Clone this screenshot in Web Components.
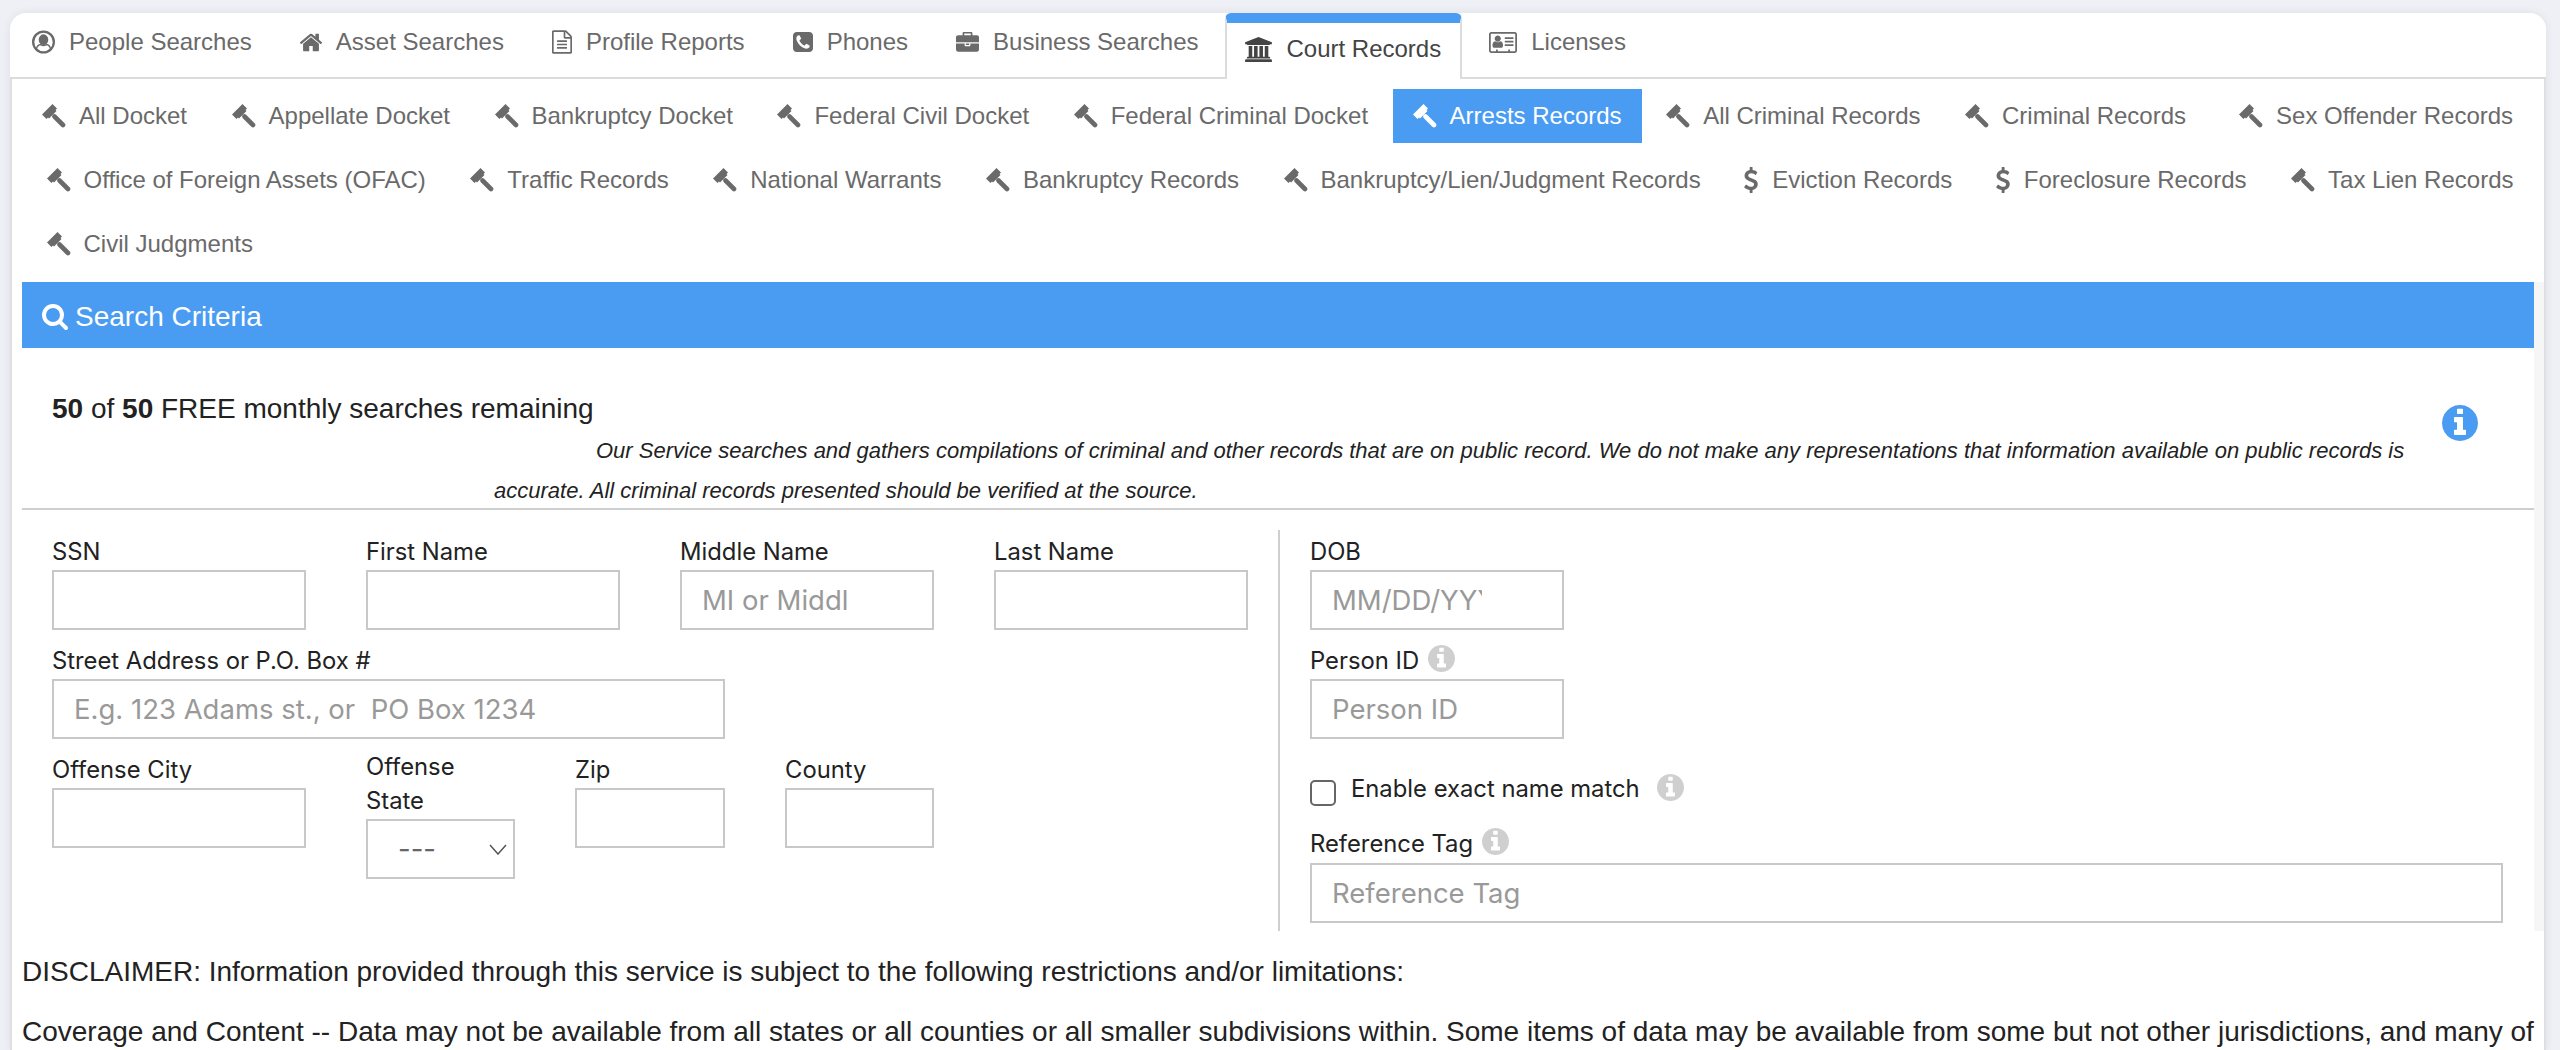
<!DOCTYPE html>
<html>
<head>
<meta charset="utf-8">
<title>Court Records</title>
<style>
	html, body { margin: 0; height: 1050px; overflow: hidden; }
	body { background: #eef0f6; font-family: "Liberation Sans", Arial, sans-serif; color: #222; }
</style>
</head>
<body>
<search-card>
	<tab-bar slot="tabs">
		<nav-tab icon="user" first>People Searches</nav-tab>
		<nav-tab icon="home">Asset Searches</nav-tab>
		<nav-tab icon="file">Profile Reports</nav-tab>
		<nav-tab icon="phone">Phones</nav-tab>
		<nav-tab icon="briefcase">Business Searches</nav-tab>
		<nav-tab icon="bank" active>Court Records</nav-tab>
		<nav-tab icon="idcard">Licenses</nav-tab>
	</tab-bar>

	<pill-nav>
		<pill-item first>All Docket</pill-item>
		<pill-item>Appellate Docket</pill-item>
		<pill-item>Bankruptcy Docket</pill-item>
		<pill-item>Federal Civil Docket</pill-item>
		<pill-item>Federal Criminal Docket</pill-item>
		<pill-item active>Arrests Records</pill-item>
		<pill-item>All Criminal Records</pill-item>
		<pill-item>Criminal Records</pill-item>
		<pill-item wide>Sex Offender Records</pill-item>
		<pill-item>Office of Foreign Assets (OFAC)</pill-item>
		<pill-item>Traffic Records</pill-item>
		<pill-item>National Warrants</pill-item>
		<pill-item>Bankruptcy Records</pill-item>
		<pill-item>Bankruptcy/Lien/Judgment Records</pill-item>
		<pill-item icon="dollar">Eviction Records</pill-item>
		<pill-item icon="dollar">Foreclosure Records</pill-item>
		<pill-item>Tax Lien Records</pill-item>
		<pill-item>Civil Judgments</pill-item>
	</pill-nav>

	<search-panel>
		<span slot="title">Search Criteria</span>
		<span slot="count"><b>50</b> of <b>50</b> FREE monthly searches remaining</span>
		<span slot="notice">Our Service searches and gathers compilations of criminal and other records that are on public record. We do not make any representations that information available on public records is accurate. All criminal records presented should be verified at the source.</span>

		<field-row slot="left">
			<form-field label="SSN"></form-field>
			<form-field label="First Name"></form-field>
			<form-field label="Middle Name" placeholder="MI or Middle Name"></form-field>
			<form-field label="Last Name"></form-field>
		</field-row>
		<field-row slot="left">
			<form-field label="Street Address or P.O. Box #" placeholder="E.g. 123 Adams st., or  PO Box 1234" width="673"></form-field>
		</field-row>
		<field-row slot="left">
			<form-field label="Offense City"></form-field>
			<form-field label="Offense State" type="select" width="149" style="margin-top:-3px"></form-field>
			<form-field label="Zip" width="150"></form-field>
			<form-field label="County" width="149"></form-field>
		</field-row>

		<field-row slot="right">
			<form-field label="DOB" placeholder="MM/DD/YYYY" pad="80"></form-field>
		</field-row>
		<field-row slot="right">
			<form-field label="Person ID" placeholder="Person ID" hint></form-field>
		</field-row>
		<check-row slot="right">Enable exact name match</check-row>
		<field-row slot="right">
			<form-field label="Reference Tag" placeholder="Reference Tag" width="1193" hint tight></form-field>
		</field-row>
	</search-panel>

	<disclaimer-text>
		<p>DISCLAIMER: Information provided through this service is subject to the following restrictions and/or limitations:</p>
		<p>Coverage and Content -- Data may not be available from all states or all counties or all smaller subdivisions within. Some items of data may be available from some but not other jurisdictions, and many of</p>
	</disclaimer-text>
</search-card>

<script>
	// font awesome 4 shapes, plus a hand drawn gavel
	const ICONS = {
		user: { box: '0 0 24 24', w: 23, h: 24, svg: '<circle cx="12" cy="12" r="10.8" fill="none" stroke="currentColor" stroke-width="2.4"/><ellipse cx="12" cy="9.6" rx="5" ry="5.6" fill="currentColor"/><path d="M4.6 19.4c.6-3 2.4-4.6 4.4-4.8 1.8 1.3 4.2 1.3 6 0 2 .2 3.800 1.800 4.400 4.800" fill="none" stroke="currentColor" stroke-width="1.500"/>' },
		home: { box: '96 224 1600 1344', w: 22, h: 19, d: 'M1472 992v480q0 26-19 45t-45 19h-384v-384h-256v384h-384q-26 0-45-19t-19-45v-480q0-1 .5-3t.5-3l575-474 575 474q1 2 1 6zm223-69l-62 74q-8 9-21 11h-3q-13 0-21-7l-692-577-692 577q-12 8-24 7-13-2-21-11l-62-74q-8-10-7-23.500t11-20.500l719-599q32-26 76-26t76 26l244 204v-195q0-14 9-23t23-9h192q14 0 23 9t9 23v408l219 182q10 8 11 21.500t-7 23.500z' },
		file: { box: '128 0 1536 1792', w: 20, h: 24, d: 'M1596 380q28 28 48 76t20 88v1152q0 40-28 68t-68 28h-1344q-40 0-68-28t-28-68v-1600q0-40 28-68t68-28h896q40 0 88 20t76 48zm-444-244v376h376q-10-29-22-41l-313-313q-12-12-41-22zm384 1528v-1024h-416q-40 0-68-28t-28-68v-416h-768v1536h1280zm-1024-864q0-14 9-23t23-9h704q14 0 23 9t9 23v64q0 14-9 23t-23 9h-704q-14 0-23-9t-9-23v-64zm736 224q14 0 23 9t9 23v64q0 14-9 23t-23 9h-704q-14 0-23-9t-9-23v-64q0-14 9-23t23-9h704zm0 256q14 0 23 9t9 23v64q0 14-9 23t-23 9h-704q-14 0-23-9t-9-23v-64q0-14 9-23t23-9h704z' },
		phone: { box: '128 128 1536 1536', w: 20, h: 20, d: 'M1408 1193q0-11-2-16t-18-16.500-40.500-25-47.500-26.500-45.500-25-28.500-15q-5-3-19-13t-25-15-21-5q-15 0-36.500 20.500t-39.500 45-38.500 45-33.500 20.500q-7 0-16.500-3.500t-15.500-6.500-17-9.500-14-8.500q-99-55-170-126.500t-127-170.500q-2-3-8.500-14t-9.500-17-6.500-15.500-3.500-16.500q0-13 20.500-33.500t45-38.500 45-39.500 20.500-36.500q0-10-5-21t-15-25-13-19q-3-6-15-28.500t-25-45.500-26.500-47.500-25-40.500-16.500-18-16-2q-48 0-101 22-46 21-80 94.500t-34 130.500q0 16 2.500 34t5 30.500 9 33 10 29.500 12.500 33 11 30q60 164 216.500 320.500t320.500 216.500q6 2 30 11t33 12.500 29.500 10 33 9 30.500 5 34 2.500q57 0 130.500-34t94.500-80q22-53 22-101zm256-777v960q0 119-84.500 203.500t-203.500 84.500h-960q-119 0-203.500-84.500t-84.500-203.500v-960q0-119 84.500-203.500t203.500-84.500h960q119 0 203.500 84.500t84.500 203.500z' },
		briefcase: { box: '0 32 1792 1504', w: 23, h: 20, d: 'M640 256h512v-128h-512v128zm1152 640v480q0 66-47 113t-113 47h-1472q-66 0-113-47t-47-113v-480h672v160q0 26 19 45t45 19h320q26 0 45-19t19-45v-160h672zm-768 0v128h-256v-128h256zm768-480v384h-1792v-384q0-66 47-113t113-47h352v-160q0-40 28-68t68-28h576q40 0 68 28t28 68v160h352q66 0 113 47t47 113z' },
		bank: { box: '0 0 1920 1792', w: 27, h: 25, d: 'M960 0l960 384v128h-128q0 26-20.500 45t-48.500 19h-1526q-28 0-48.500-19t-20.500-45h-128v-128zm-704 640h256v768h128v-768h256v768h128v-768h256v768h128v-768h256v768h59q28 0 48.500 19t20.500 45v64h-1664v-64q0-26 20.500-45t48.500-19h59v-768zm1595 960q28 0 48.500 19t20.500 45v128h-1920v-128q0-26 20.500-45t48.500-19h1782z' },
		idcard: { box: '0 128 2048 1536', w: 28, h: 21, d: 'M1024 1131q0 64-37 106.500t-91 42.500h-512q-54 0-91-42.500t-37-106.500 9-117.500 29.500-103 60.500-78 97-28.500q6 4 30 18t37.500 21.500 35.500 17.500 43 14.500 42 4.500 42-4.500 43-14.500 35.500-17.500 37.500-21.500 30-18q57 0 97 28.500t60.500 78 29.500 103 9 117.500zm-157-520q0 94-66.500 160.500t-160.500 66.500-160.500-66.500-66.500-160.500 66.500-160.500 160.500-66.500 160.500 66.500 66.500 160.500zm925 445v64q0 14-9 23t-23 9h-576q-14 0-23-9t-9-23v-64q0-14 9-23t23-9h576q14 0 23 9t9 23zm0-252v56q0 15-10.500 25.500t-25.500 10.500h-568q-15 0-25.500-10.500t-10.500-25.500v-56q0-15 10.500-25.500t25.500-10.500h568q15 0 25.500 10.500t10.500 25.500zm0-260v64q0 14-9 23t-23 9h-576q-14 0-23-9t-9-23v-64q0-14 9-23t23-9h576q14 0 23 9t9 23zm128 960v-1216q0-13-9.500-22.500t-22.500-9.500h-1728q-13 0-22.500 9.500t-9.500 22.500v1216q0 13 9.500 22.500t22.500 9.500h352v-96q0-14 9-23t23-9h64q14 0 23 9t9 23v96h768v-96q0-14 9-23t23-9h64q14 0 23 9t9 23v96h352q13 0 22.500-9.500t9.500-22.500zm128-1216v1216q0 66-47 113t-113 47h-1728q-66 0-113-47t-47-113v-1216q0-66 47-113t113-47h1728q66 0 113 47t47 113z' },
		gavel: { box: '0 0 24 24', w: 24, h: 24, svg: '<path d="M10.500 0L15 4.500 13.500 6l1 1L7 14.500l-1-1L4.500 15 0 10.500z" fill="currentColor"/><path d="M12.500 12.500l8.500 8.500" fill="none" stroke="currentColor" stroke-width="4.600" stroke-linecap="round"/>' },
		dollar: { box: '430 0 932 1792', w: 14, h: 26, d: 'M1362 1185q0 153-99.500 263.500t-258.500 136.500v175q0 14-9 23t-23 9h-135q-13 0-22.500-9.500t-9.500-22.500v-175q-66-9-127.500-31t-101.500-44.500-74-48-46.500-37.500-17.500-18q-17-21-2-41l103-135q7-10 23-12 15-2 24 9l2 2q113 99 243 125 37 8 74 8 81 0 142.500-43t61.500-122q0-28-15-53t-33.500-42-58.500-37.500-66-32-80-32.500q-39-16-61.500-25t-61.500-26.500-62.500-31-56.500-35.500-53.500-42.500-43.500-49-35.500-58-21-66.500-8.500-78q0-138 98-242t255-134v-180q0-13 9.500-22.500t22.500-9.500h135q14 0 23 9t9 23v176q57 6 110.500 23t87 33.500 63.500 37.500 39 29 15 14q17 18 5 38l-81 146q-8 15-23 16-14 3-27-7-3-3-14.500-12t-39-26.500-58.500-32-74.500-26-85.500-11.500q-95 0-155 43t-60 111q0 26 8.500 48t29.500 41.500 39.500 33 56 31 60.500 27 70 27.500q53 20 81 31.500t76 35 75.500 42.500 62 50 53 63.500 31.500 76.500 13 94z' },
		search: { box: '64 128 1664 1664', w: 26, h: 26, d: 'M1216 832q0-185-131.500-316.500t-316.500-131.500-316.500 131.500-131.500 316.500 131.500 316.500 316.500 131.500 316.500-131.500 131.500-316.500zm512 832q0 52-38 90t-90 38q-54 0-90-38l-343-342q-179 124-399 124-143 0-273.500-55.500t-225-150-150-225-55.500-273.500 55.500-273.500 150-225 225-150 273.500-55.500 273.500 55.500 225 150 150 225 55.500 273.500q0 220-124 399l343 343q37 37 37 90z' },
		info: { box: '128 128 1536 1536', w: 27, h: 27, d: 'M1152 1376v-160q0-14-9-23t-23-9h-96v-512q0-14-9-23t-23-9h-320q-14 0-23 9t-9 23v160q0 14 9 23t23 9h96v320h-96q-14 0-23 9t-9 23v160q0 14 9 23t23 9h448q14 0 23-9t9-23zm-128-896v-160q0-14-9-23t-23-9h-192q-14 0-23 9t-9 23v160q0 14 9 23t23 9h192q14 0 23-9t9-23zm640 416q0 209-103 385.500t-279.500 279.500-385.500 103-385.500-103-279.500-279.500-103-385.500 103-385.500 279.500-279.500 385.500-103 385.500 103 279.500 279.500 103 385.500z' }
	};

	class FaIcon extends HTMLElement {
		connectedCallback() {
			const icon = ICONS[this.getAttribute('name')];
			const w = this.getAttribute('w') || icon.w;
			const h = this.getAttribute('h') || icon.h;
			const body = icon.svg || `<path fill="currentColor" d="${icon.d}"/>`;
			this.attachShadow({ mode: 'open' }).innerHTML = `
				<style>
					:host { display: inline-block; flex: none; line-height: 0; }
				</style>
				<svg width="${w}" height="${h}" viewBox="${icon.box}">${body}</svg>
			`;
		}
	}

	class SearchCard extends HTMLElement {
		constructor() {
			super();
			this.attachShadow({ mode: 'open' }).innerHTML = `
				<style>
					:host {
						display: block;
						margin: 13px 14px 0 10px;
						background: #fff;
						border-radius: 16px 16px 0 0;
						box-shadow: 0 0 10px rgba(0, 0, 0, .07);
					}
					.content {
						border-left: 2px solid #dfdfe2;
						border-right: 2px solid #dfdfe2;
						padding: 10px 10px 0;
					}
				</style>
				<slot name="tabs"></slot>
				<div class="content"><slot></slot></div>
			`;
		}
	}

	class TabBar extends HTMLElement {
		constructor() {
			super();
			this.attachShadow({ mode: 'open' }).innerHTML = `
				<style>
					:host {
						display: flex;
						height: 64px;
						border-bottom: 2px solid #dcdcdc;
					}
				</style>
				<slot></slot>
			`;
		}
	}

	class NavTab extends HTMLElement {
		constructor() {
			super();
			const icon = this.getAttribute('icon');
			this.attachShadow({ mode: 'open' }).innerHTML = `
				<style>
					:host {
						display: block;
						height: 66px;
						box-sizing: border-box;
						padding: 12px 24px 0;
						color: #6a6a6a;
						font-size: 24px;
						line-height: 34px;
						white-space: nowrap;
					}
					:host([first]) { padding-left: 22px; }
					:host([active]) {
						position: relative;
						margin-left: 3px;
						margin-right: 3px;
						padding: 9px 19px 0 18px;
						background: #fff;
						color: #444;
						border-top: 10px solid #4a9cf2;
						border-left: 2px solid #dcdcdc;
						border-right: 2px solid #dcdcdc;
						border-radius: 6px 6px 0 0;
					}
					.row { display: flex; align-items: center; gap: 14px; height: 34px; }
				</style>
				<div class="row"><fa-icon name="${icon}"></fa-icon><span><slot></slot></span></div>
			`;
		}
	}

	class PillNav extends HTMLElement {
		constructor() {
			super();
			this.attachShadow({ mode: 'open' }).innerHTML = `
				<style>
					:host { display: flex; flex-wrap: wrap; margin-right: -4px; }
				</style>
				<slot></slot>
			`;
		}
	}

	class PillItem extends HTMLElement {
		constructor() {
			super();
			const icon = this.getAttribute('icon') || 'gavel';
			this.attachShadow({ mode: 'open' }).innerHTML = `
				<style>
					:host {
						display: flex;
						align-items: center;
						gap: 13px;
						height: 54px;
						margin: 0 0 10px 4.500px;
						padding: 0 20px;
						color: #6a6a6a;
						font-size: 24px;
						white-space: nowrap;
					}
					:host([first]) { margin-left: 0; }
					:host([wide]) { margin-left: 13px; }
					:host([icon]) { gap: 14px; margin-left: 3.500px; }
					:host([active]) { background: #4a9cf2; color: #fff; }
				</style>
				<fa-icon name="${icon}"></fa-icon><span><slot></slot></span>
			`;
		}
	}

	class SearchPanel extends HTMLElement {
		constructor() {
			super();
			this.attachShadow({ mode: 'open' }).innerHTML = `
				<style>
					:host {
						display: block;
						margin-top: 1px;
						box-shadow: 10px 0 0 #f6f6f6;
						background: #fff;
					}
					header {
						display: flex;
						align-items: center;
						gap: 7px;
						height: 66px;
						box-sizing: border-box;
						padding: 4px 0 0 20px;
						background: #4a9cf2;
						color: #fff;
						font-size: 28px;
					}
					.notice {
						display: flex;
						align-items: flex-start;
						padding-right: 56px;
						border-bottom: 2px solid #cfcfcf;
						height: 160px;
					}
					.notice-text { flex: 1; padding-top: 41px; }
					.count { padding-left: 30px; font-size: 28px; line-height: 40px; color: #222; }
					.legal {
						margin: 2px 30px 0 0;
						padding-left: 472px;
						text-indent: 102px;
						font-size: 22px;
						font-style: italic;
						line-height: 40px;
						color: #222;
					}
					.notice fa-icon { margin-top: 57px; color: #4a9cf2; }
					.form { display: flex; margin-top: 20px; height: 401px; }
					.left { width: 1256px; box-sizing: border-box; padding: 5px 0 0 30px; }
					.right {
						flex: 1;
						box-sizing: border-box;
						padding: 5px 0 0 30px;
						border-left: 2px solid #cfcfcf;
					}
				</style>
				<header><fa-icon name="search" w="26" h="26"></fa-icon><span><slot name="title"></slot></span></header>
				<div class="notice">
					<div class="notice-text">
						<div class="count"><slot name="count"></slot></div>
						<p class="legal"><slot name="notice"></slot></p>
					</div>
					<fa-icon name="info" w="36" h="36"></fa-icon>
				</div>
				<div class="form">
					<div class="left"><slot name="left"></slot></div>
					<div class="right"><slot name="right"></slot></div>
				</div>
			`;
		}
	}

	class FieldRow extends HTMLElement {
		constructor() {
			super();
			this.attachShadow({ mode: 'open' }).innerHTML = `
				<style>
					:host {
						display: flex;
						align-items: flex-start;
						gap: 60px;
						margin-bottom: 14px;
					}
				</style>
				<slot></slot>
			`;
		}
	}

	class FormField extends HTMLElement {
		constructor() {
			super();
			const label = this.getAttribute('label');
			const width = this.getAttribute('width') || 254;
			const placeholder = this.getAttribute('placeholder') || '';
			// short boxes keep a wide right padding, long placeholders clip early
			const padRight = this.getAttribute('pad') || (width == 254 ? 85 : 20);
			const control = this.getAttribute('type') === 'select'
				? `<div class="select-box">
						<select><option>---</option></select>
						<svg width="18" height="11" viewBox="0 0 18 11"><path d="M1 1l8 9 8-9" fill="none" stroke="#555" stroke-width="1.500"/></svg>
					</div>`
				: `<input type="text" placeholder="${placeholder}">`;
			const hint = this.hasAttribute('hint') ? '<fa-icon name="info"></fa-icon>' : '';
			this.attachShadow({ mode: 'open' }).innerHTML = `
				<style>
					:host { display: block; width: ${width}px; flex: none; }
					label {
						display: flex;
						flex-wrap: wrap;
						align-items: center;
						gap: 0 9px;
						margin-bottom: 1px;
						font: 23.800px/34px Inter, "Liberation Sans", sans-serif;
						color: #222;
					}
					:host([tight]) label { margin-bottom: 2px; }
					label fa-icon { color: #cfcfcf; margin-top: -5px; }
					input, select {
						display: block;
						width: 100%;
						height: 60px;
						box-sizing: border-box;
						margin: 0;
						border: 2px solid #c8c8c8;
						border-radius: 0;
						outline: 0;
						background: #fff;
						font: 27.500px Inter, "Liberation Sans", sans-serif;
						color: #666;
					}
					input { padding: 0 ${padRight}px 0 20px; }
					input::placeholder { color: #999; opacity: 1; }
					select { appearance: none; padding: 0 0 0 30px; }
					.select-box { position: relative; }
					.select-box svg { position: absolute; right: 8px; top: 25px; pointer-events: none; }
				</style>
				<label>${label}${hint}</label>
				${control}
			`;
		}
	}

	class CheckRow extends HTMLElement {
		constructor() {
			super();
			this.attachShadow({ mode: 'open' }).innerHTML = `
				<style>
					:host {
						display: flex;
						align-items: flex-end;
						height: 34px;
						margin: 33px 0 21px;
						font: 23.800px/34px Inter, "Liberation Sans", sans-serif;
						color: #222;
					}
					input {
						appearance: none;
						width: 26px;
						height: 26px;
						box-sizing: border-box;
						margin: 0 15px 0 0;
						border: 2px solid #666;
						border-radius: 5px;
						background: #fff;
					}
					fa-icon { color: #cfcfcf; margin: 0 0 5px 17px; }
				</style>
				<input type="checkbox"><span><slot></slot></span><fa-icon name="info"></fa-icon>
			`;
		}
	}

	class DisclaimerText extends HTMLElement {
		constructor() {
			super();
			this.attachShadow({ mode: 'open' }).innerHTML = `
				<style>
					:host {
						display: block;
						margin-top: 21px;
						font-size: 28px;
						line-height: 40px;
						color: #222;
					}
					::slotted(p) { margin: 0 0 20px; }
				</style>
				<slot></slot>
			`;
		}
	}

	customElements.define('fa-icon', FaIcon);
	customElements.define('search-card', SearchCard);
	customElements.define('tab-bar', TabBar);
	customElements.define('nav-tab', NavTab);
	customElements.define('pill-nav', PillNav);
	customElements.define('pill-item', PillItem);
	customElements.define('search-panel', SearchPanel);
	customElements.define('field-row', FieldRow);
	customElements.define('form-field', FormField);
	customElements.define('check-row', CheckRow);
	customElements.define('disclaimer-text', DisclaimerText);
</script>
</body>
</html>
